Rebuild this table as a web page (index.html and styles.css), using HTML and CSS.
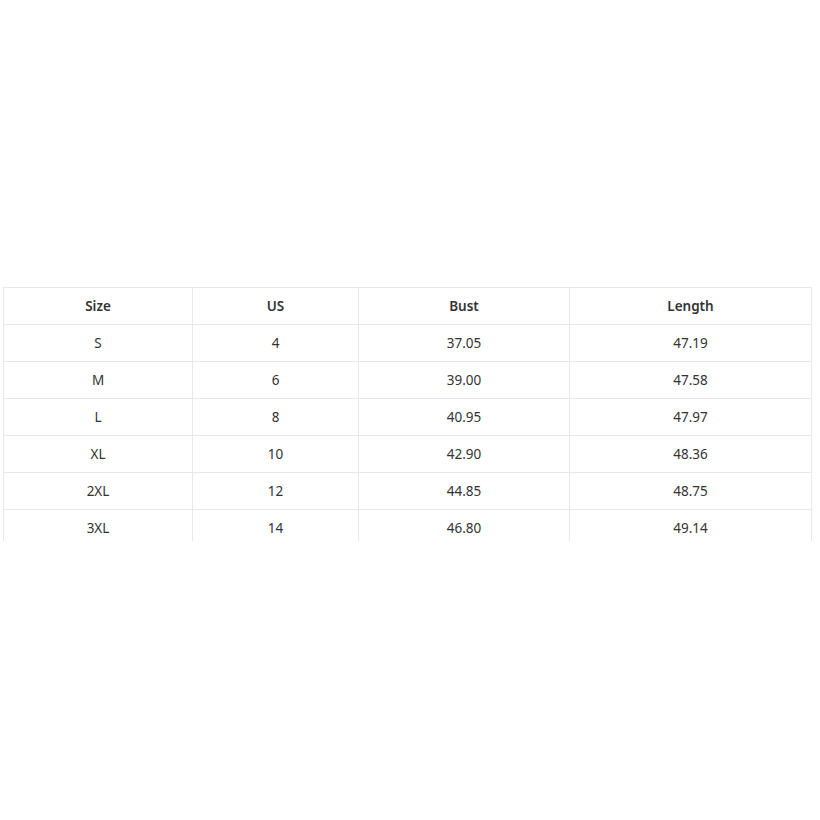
FILE: index.html
```html
<!DOCTYPE html>
<html>
<head>
<meta charset="utf-8">
<link rel="stylesheet" href="styles.css">
</head>
<body>
<div class="page">
  <div class="table-wrap">
    <table class="size-table">
      <colgroup>
        <col class="c1"><col class="c2"><col class="c3"><col class="c4">
      </colgroup>
      <thead>
        <tr><th>Size</th><th>US</th><th>Bust</th><th>Length</th></tr>
      </thead>
      <tbody>
        <tr><td>S</td><td>4</td><td>37.05</td><td>47.19</td></tr>
        <tr><td>M</td><td>6</td><td>39.00</td><td>47.58</td></tr>
        <tr><td>L</td><td>8</td><td>40.95</td><td>47.97</td></tr>
        <tr><td>XL</td><td>10</td><td>42.90</td><td>48.36</td></tr>
        <tr><td>2XL</td><td>12</td><td>44.85</td><td>48.75</td></tr>
        <tr><td>3XL</td><td>14</td><td>46.80</td><td>49.14</td></tr>
      </tbody>
    </table>
  </div>
</div>
</body>
</html>
```
FILE: styles.css
```css
html, body {
  margin: 0;
  padding: 0;
  background: #fff;
}
.page {
  width: 820px;
  height: 820px;
  padding: 287px 0 0 3px;
  box-sizing: border-box;
}
.table-wrap {
  width: 809px;
  height: 254px;
  overflow: hidden;
}
.size-table {
  width: 809px;
  table-layout: fixed;
  border-collapse: collapse;
  font-family: "Noto Sans", "Open Sans", sans-serif;
  font-size: 13.5px;
  color: #333;
}
.c1 { width: 189px; }
.c2 { width: 166px; }
.c3 { width: 211px; }
.c4 { width: 242px; }
.size-table th,
.size-table td {
  border: 1px solid #e8e8e8;
  height: 36px;
  padding: 0;
  text-align: center;
  vertical-align: middle;
  line-height: 20px;
}
.size-table th {
  font-weight: 600;
}
.size-table td {
  font-weight: 400;
}
```
